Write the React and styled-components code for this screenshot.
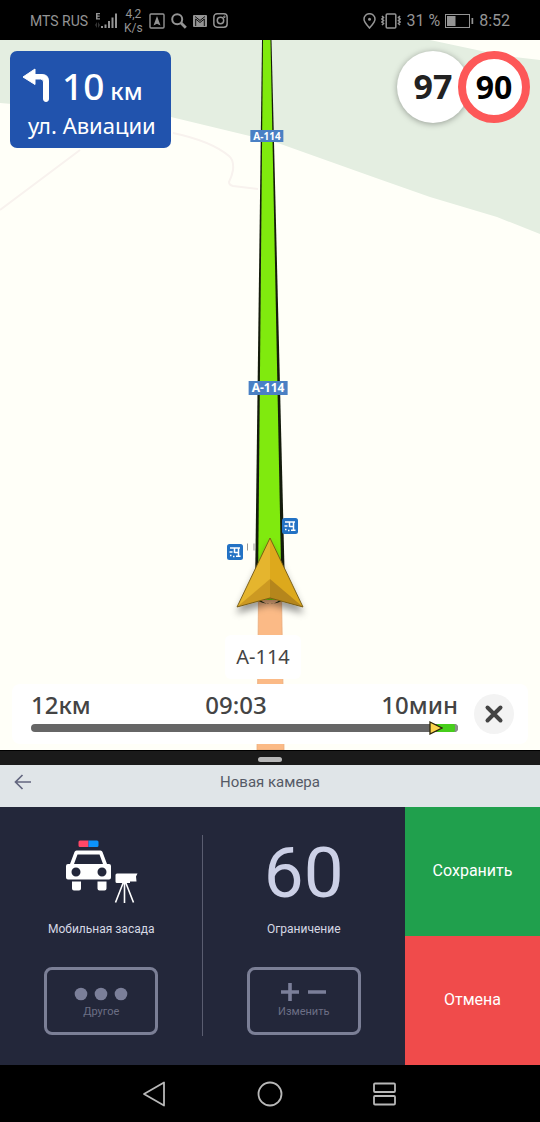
import React from "react";
import styled, { createGlobalStyle } from "styled-components";

const GlobalStyle = createGlobalStyle`
  *, *::before, *::after { box-sizing: border-box; }
  body { margin: 0; background: #000; }
  button { font: inherit; color: inherit; border: 0; padding: 0; background: none; cursor: pointer; }
  svg { display: block; flex: none; }
`;

const mapFont = `"Noto Sans", "Open Sans", sans-serif`;
const uiFont = `Roboto, "Liberation Sans", sans-serif`;

const Screen = styled.div`
  display: flex;
  flex-direction: column;
  min-height: 100vh;
  font-family: ${uiFont};
`;

const StatusBar = styled.header`
  display: flex;
  align-items: center;
  justify-content: space-between;
  height: 40px;
  padding: 1px 30px 0;
  background: #000;
  color: #949494;
`;

const StatusGroup = styled.div`
  display: flex;
  align-items: center;
  gap: ${(p) => p.$gap}px;
`;

const StatusText = styled.span`
  font-size: ${(p) => p.$size}px;
  line-height: 14px;
  white-space: pre-line;
  text-align: center;
`;

const MapView = styled.main`
  position: relative;
  display: flex;
  flex-direction: column;
  flex: 1 0 auto;
  min-height: 640px;
  overflow: hidden;
  background: #fffff8;
  font-family: ${mapFont};
`;

const MapDrawing = styled.svg`
  position: absolute;
  inset: 0;
  width: 100%;
  height: 100%;
`;

const Shield = styled.span`
  position: absolute;
  left: calc(50% + ${(p) => p.$x}px);
  top: ${(p) => p.$y}px;
  transform: translate(-50%, -50%);
  padding: 0 3px;
  background: #4a80c4;
  color: #fff;
  font-size: ${(p) => p.$size}px;
  font-weight: 700;
  line-height: ${(p) => p.$size + 2}px;
`;

const TopRow = styled.div`
  position: relative;
  display: flex;
  align-items: flex-start;
  justify-content: space-between;
  padding: 11px 10px 0;
`;

const TurnCard = styled.section`
  display: flex;
  flex-direction: column;
  width: 161px;
  height: 97px;
  padding: 12px 14px 0 12px;
  border-radius: 7px;
  background: #2153ad;
  color: #fff;
`;

const TurnDistance = styled.div`
  display: flex;
  align-items: baseline;
  gap: 6px;
  height: 46px;
  font-size: 37px;
  font-weight: 500;
  line-height: 46px;

  svg { align-self: flex-start; margin: 4px 6px 0 0; }
  small { font-size: 24px; }
`;

const TurnStreet = styled.div`
  padding-left: 6px;
  font-size: 22px;
  line-height: 32px;
  white-space: nowrap;
`;

const Speeds = styled.div`
  display: flex;
`;

const SpeedDisc = styled.div`
  display: flex;
  align-items: center;
  justify-content: center;
  width: 72px;
  height: 72px;
  padding-bottom: 2px;
  border-radius: 50%;
  background: #fff;
  color: #222;
  font-size: 34px;
  font-weight: 700;
  box-shadow: 0 1px 6px rgba(0, 0, 0, 0.35);
`;

const LimitDisc = styled(SpeedDisc)`
  margin-left: -11px;
  border: 8px solid #fd5858;
  color: #000;
  font-size: 32px;
  box-shadow: none;
`;

const MapBottom = styled.div`
  position: relative;
  display: flex;
  flex-direction: column;
  align-items: center;
  gap: 5px;
  margin-top: auto;
  padding: 0 12px 6px;
`;

const RoadName = styled.div`
  margin-right: 14px;
  padding: 0 11px;
  border-radius: 6px;
  background: #fff;
  color: #444;
  font-size: 20px;
  line-height: 44px;
`;

const TripPanel = styled.section`
  display: flex;
  align-items: center;
  gap: 16px;
  align-self: stretch;
  height: 60px;
  padding: 0 14px 0 19px;
  border-radius: 8px;
  background: #fff;
`;

const TripInfo = styled.div`
  flex: 1;
  padding-bottom: 8px;
`;

const TripFigures = styled.div`
  display: flex;
  justify-content: space-between;
  color: #444;
  font-size: 24px;
  font-weight: 500;
  line-height: 32px;
`;

const TripTrack = styled.div`
  position: relative;
  display: flex;
  justify-content: flex-end;
  height: 8px;
  margin-top: 3px;
  border-radius: 4px;
  background: #666;
`;

const TripLeft = styled.div`
  position: relative;
  width: 5%;
  border-right: 3px solid #8a8f8a;
  border-radius: 0 4px 4px 0;
  background: #46ce1b;

  svg { position: absolute; left: -8px; top: -3px; }
`;

const CloseButton = styled.button`
  display: flex;
  align-items: center;
  justify-content: center;
  width: 40px;
  height: 40px;
  border-radius: 50%;
  background: #f3f3f3;
`;

const SplitHandle = styled.div`
  display: flex;
  align-items: center;
  justify-content: center;
  height: 15px;
  padding-top: 2px;
  background: #1a1a1a;
  border-top: 1px solid #000;

  &::before {
    content: "";
    width: 24px;
    height: 5px;
    border-radius: 3px;
    background: #b8b8b8;
  }
`;

const TitleBar = styled.header`
  display: grid;
  grid-template-columns: 38px 1fr 38px;
  align-items: center;
  height: 42px;
  padding: 0 4px 8px;
  background: #e0e5e8;
  color: #555a66;
`;

const BackButton = styled.button`
  display: flex;
  justify-content: center;
`;

const Title = styled.h1`
  margin: 0;
  font-size: 15px;
  font-weight: 400;
  line-height: 20px;
  text-align: center;
`;

const CameraForm = styled.section`
  display: grid;
  grid-template-columns: 3fr 3fr 2fr;
  height: 258px;
  background: #23273a;
`;

const Setting = styled.div`
  position: relative;
  display: flex;
  flex-direction: column;
  align-items: center;
  padding: 29px 0 30px;

  & + &::before {
    content: "";
    position: absolute;
    left: -1px;
    top: 28px;
    bottom: 29px;
    width: 1px;
    background: #5a5d70;
  }
`;

const SettingValue = styled.div`
  display: flex;
  align-items: center;
  height: 74px;
  color: #ccd0e6;
  font-size: 71px;
  line-height: 72px;
`;

const SettingLabel = styled.div`
  margin-top: 11px;
  color: #d6d8e4;
  font-size: 12px;
  line-height: 16px;
`;

const SettingButton = styled.button`
  display: flex;
  flex-direction: column;
  align-items: center;
  justify-content: center;
  gap: 4px;
  width: 114px;
  height: 68px;
  margin-top: auto;
  border: 3px solid #7b7f96;
  border-radius: 8px;
  color: #6c6f85;
  font-size: 11px;
  line-height: 14px;
`;

const Actions = styled.div`
  display: flex;
  flex-direction: column;
`;

const ActionButton = styled.button`
  flex: 1;
  padding-bottom: 2px;
  background: ${(p) => p.$color};
  color: #fff;
  font-size: 16px;
`;

const NavBar = styled.nav`
  display: flex;
  align-items: center;
  justify-content: center;
  gap: 89px;
  height: 57px;
  background: #000;
`;

const NavButton = styled.button`
  display: flex;
`;

const SignalIcon = () => (
  <svg width="24" height="18" viewBox="0 0 24 18" fill="#949494">
    <path d="M2 1h4v1.300H3.500v1.300H5.700v1.200H3.500v1.400H6v1.300H2z" />
    <path d="M1 13l2-3v6zM4 10l2 3-2 3z" opacity=".35" />
    <path d="M7 14h2v2H7zM10.500 12.500h2V16h-2zM14 9h2v7h-2zM17.500 5.500h2V16h-2zM21 1.500h2V16h-2z" />
  </svg>
);

const NavigatorIcon = () => (
  <svg width="16" height="16" viewBox="0 0 16 16">
    <rect x="1" y="1" width="14" height="14" rx="1" fill="none" stroke="#949494" strokeWidth="1.400" />
    <path d="M8 3l3.500 9.500L8 10.700l-3.500 1.800z" fill="#949494" />
  </svg>
);

const SearchIcon = () => (
  <svg width="16" height="16" viewBox="0 0 16 16" fill="none" stroke="#949494">
    <circle cx="6.200" cy="6.200" r="5" strokeWidth="2" />
    <path d="M9.800 9.800l5 5" strokeWidth="2.800" />
  </svg>
);

const MailIcon = () => (
  <svg width="14" height="12" viewBox="0 0 14 12">
    <rect width="14" height="12" rx="1" fill="#949494" />
    <path d="M2.700 11V4L7 7.500 11.300 4V11M2 1.500l5 4 5-4" fill="none" stroke="#000" strokeWidth=".9" />
  </svg>
);

const CameraIcon = () => (
  <svg width="15" height="15" viewBox="0 0 14 14" fill="none" stroke="#949494" strokeWidth="1.400">
    <rect x=".8" y=".8" width="12.400" height="12.400" rx="3" />
    <circle cx="7" cy="7" r="3" />
    <circle cx="10.600" cy="3.500" r=".4" />
  </svg>
);

const PlaceIcon = () => (
  <svg width="13" height="16" viewBox="0 0 13 16">
    <path d="M6.500 15C3.500 11.500 1 9 1 6.200a5.500 5.500 0 0 1 11 0C12 9 9.500 11.500 6.500 15z" fill="none" stroke="#949494" strokeWidth="1.500" />
    <circle cx="6.500" cy="6.200" r="1.500" fill="#949494" />
  </svg>
);

const VibrateIcon = () => (
  <svg width="20" height="16" viewBox="0 0 20 16" fill="none" stroke="#949494">
    <rect x="5.200" y="1" width="9.600" height="14" rx="1" strokeWidth="1.500" />
    <path d="M1 3l1.500 1.500L1 6l1.500 1.500L1 9l1.500 1.500L1 12M19 3l-1.500 1.500L19 6l-1.500 1.500L19 9l-1.500 1.500L19 12" strokeWidth="1.600" />
  </svg>
);

const BatteryIcon = () => (
  <svg width="29" height="14" viewBox="0 0 29 14">
    <rect x=".5" y=".5" width="24" height="13" fill="none" stroke="#949494" />
    <path d="M2 2h8.500v10H2zM26.500 4h1.700v6h-1.700z" fill="#949494" />
  </svg>
);

const TurnLeftIcon = () => (
  <svg width="28" height="36" viewBox="0 0 28 36">
    <path d="M1 10L13 2v5.500h7q6.500 0 6.500 6.500v18a2.500 2.500 0 0 1-5 0V15q0-3-3-3H13v5.500z" fill="#fff" stroke="#fff" strokeLinejoin="round" />
  </svg>
);

const BusStop = () => (
  <g>
    <rect width="16" height="16" rx="2.500" fill="#2372c4" />
    <path d="M3 4h10M7.500 4v5M11.500 4v8M7.500 8.500h4M9 12.300h4.500M2.500 8h3M3 11.500h1.500M6 12.500h1.500" stroke="#fff" strokeWidth="1.500" fill="none" />
  </g>
);

const PatrolIcon = () => (
  <svg width="74" height="66" viewBox="0 0 74 66">
    <path d="M14.500 2a1.500 1.500 0 0 1 1.500-1.500h8.500v6.500H16A1.500 1.500 0 0 1 14.500 5.500z" fill="#ff4767" />
    <path d="M24.500.5H33A1.500 1.500 0 0 1 34.500 2v3.500A1.500 1.500 0 0 1 33 7h-8.500z" fill="#0c93fb" />
    <path fillRule="evenodd" fill="#fff" d="M12.500 10.500h24q1.500 0 2 1.500l4.500 12h2q2 0 2 2v11.500q0 2-2 2h-41q-2 0-2-2V26q0-2 2-2h2l4.500-12q.5-1.500 2-1.500zM13.500 14.500L10 24h29l-3.500-9.500zM12 27.500a4.500 4.500 0 1 0 0 9 4.500 4.500 0 0 0 0-9zM38 27.500a4.500 4.500 0 1 0 0 9 4.500 4.500 0 0 0 0-9z" />
    <path d="M8 41.500h9v7q0 2-2 2h-5q-2 0-2-2zM33.500 41.500h9v7q0 2-2 2h-5q-2 0-2-2z" fill="#fff" />
    <path d="M53 33.500h20.500l-1.500 3 .5 5h-6.500v1.500H53q-1.500 0-1.500-1.500V35q0-1.500 1.500-1.500z" fill="#fff" />
    <path d="M60.500 42v21M59.500 42L51.500 62.500M61.500 42l8 20.500" stroke="#fff" strokeWidth="1.600" fill="none" />
  </svg>
);

const MapCanvas = () => (
  <MapDrawing viewBox="0 0 540 710" preserveAspectRatio="xMidYMin slice" aria-hidden="true">
    <defs>
      <filter id="arrowShadow" x="-30%" y="-30%" width="160%" height="170%">
        <feDropShadow dx="0" dy="6" stdDeviation="3.500" floodColor="#000" floodOpacity=".4" />
      </filter>
    </defs>
    <path d="M-400 0H430L505 16 540 20 900 60V360L540 194 497 177 430 157 376 138 275 102 171 77 0 63-400 30z" fill="#e4eee1" />
    <path d="M0 170L80 110M173 93q38 8 56 23 5 4 4 14-1 6-4 12 0 3 4 4l25 3" fill="none" stroke="#f8f2ee" strokeWidth="2" />
    <path d="M258.500 555H281.500L284 710H257z" fill="#fbba86" stroke="#e8ab7b" strokeWidth=".8" />
    <path d="M262 0H271.500L285 550 283 560H256.500L255 550z" fill="#151c0c" />
    <path d="M263 0H270.500L281.500 550V560H258V550z" fill="#80ea0e" />
    <path d="M247.500 503.500v7M254 503.500v7" stroke="#999" />
    <g transform="translate(282 478)"><BusStop /></g>
    <g transform="translate(227 504)"><BusStop /></g>
    <path d="M258 558q12 12 24 0v3q-12 6-24 0z" fill="#17260d" />
    <g filter="url(#arrowShadow)">
      <path d="M270 498L237 567 270 558z" fill="#e5b52d" />
      <path d="M270 498L303 567 270 558z" fill="#dda91c" />
      <path d="M237 567L270 539V558z" fill="#cc9924" />
      <path d="M303 567L270 539V558z" fill="#b5861b" />
      <path d="M270 498L303 567 270 558 237 567z" fill="none" stroke="#715714" strokeWidth=".9" />
    </g>
  </MapDrawing>
);

export default function App() {
  return (
    <Screen>
      <GlobalStyle />
      <StatusBar>
        <StatusGroup $gap={6}>
          <StatusText $size={14}>MTS RUS</StatusText>
          <SignalIcon />
          <StatusText $size={12}>{"4,2\nK/s"}</StatusText>
          <NavigatorIcon />
          <SearchIcon />
          <MailIcon />
          <CameraIcon />
        </StatusGroup>
        <StatusGroup $gap={5}>
          <PlaceIcon />
          <VibrateIcon />
          <StatusText $size={16}>31 %</StatusText>
          <BatteryIcon />
          <StatusText $size={16}>8:52</StatusText>
        </StatusGroup>
      </StatusBar>

      <MapView>
        <MapCanvas />
        <Shield $x={-3} $y={96} $size={10}>A-114</Shield>
        <Shield $x={-2} $y={348} $size={12}>A-114</Shield>
        <TopRow>
          <TurnCard>
            <TurnDistance>
              <TurnLeftIcon />
              10 <small>км</small>
            </TurnDistance>
            <TurnStreet>ул. Авиации</TurnStreet>
          </TurnCard>
          <Speeds>
            <SpeedDisc>97</SpeedDisc>
            <LimitDisc>90</LimitDisc>
          </Speeds>
        </TopRow>
        <MapBottom>
          <RoadName>A-114</RoadName>
          <TripPanel>
            <TripInfo>
              <TripFigures>
                <span>12км</span>
                <span>09:03</span>
                <span>10мин</span>
              </TripFigures>
              <TripTrack>
                <TripLeft>
                  <svg width="14" height="14" viewBox="0 0 14 14">
                    <path d="M1 1l12 6-12 6z" fill="#fbd34c" stroke="#2b2408" strokeWidth="1.300" />
                  </svg>
                </TripLeft>
              </TripTrack>
            </TripInfo>
            <CloseButton aria-label="Закрыть">
              <svg width="20" height="20" viewBox="0 0 20 20">
                <path d="M3.500 3.500l13 13M16.500 3.500l-13 13" stroke="#444" strokeWidth="4" strokeLinecap="round" />
              </svg>
            </CloseButton>
          </TripPanel>
        </MapBottom>
      </MapView>

      <SplitHandle />

      <TitleBar>
        <BackButton aria-label="Назад">
          <svg width="18" height="16" viewBox="0 0 18 16" fill="none" stroke="#63667f" strokeWidth="1.700">
            <path d="M17 8H1.500M8.500 1l-7 7 7 7" />
          </svg>
        </BackButton>
        <Title>Новая камера</Title>
      </TitleBar>

      <CameraForm>
        <Setting>
          <SettingValue>
            <PatrolIcon />
          </SettingValue>
          <SettingLabel>Мобильная засада</SettingLabel>
          <SettingButton>
            <svg width="54" height="18" viewBox="0 0 54 18" fill="#7b7f99">
              <circle cx="7" cy="11" r="6.300" />
              <circle cx="27" cy="11" r="6.300" />
              <circle cx="47" cy="11" r="6.300" />
            </svg>
            Другое
          </SettingButton>
        </Setting>
        <Setting>
          <SettingValue>60</SettingValue>
          <SettingLabel>Ограничение</SettingLabel>
          <SettingButton>
            <svg width="46" height="18" viewBox="0 0 46 18" fill="none" stroke="#7b7f99" strokeWidth="3.600">
              <path d="M0 9h18M9 0v18M27 9h18" />
            </svg>
            Изменить
          </SettingButton>
        </Setting>
        <Actions>
          <ActionButton $color="#20a04d">Сохранить</ActionButton>
          <ActionButton $color="#f04b4b">Отмена</ActionButton>
        </Actions>
      </CameraForm>

      <NavBar>
        <NavButton aria-label="Назад">
          <svg width="26" height="26" viewBox="0 0 26 26" fill="none" stroke="#b8b8b8" strokeWidth="1.800" strokeLinejoin="round">
            <path d="M22 1.500v23L2 13z" />
          </svg>
        </NavButton>
        <NavButton aria-label="Домой">
          <svg width="26" height="26" viewBox="0 0 26 26" fill="none" stroke="#b8b8b8" strokeWidth="1.800">
            <circle cx="13" cy="13" r="11.500" />
          </svg>
        </NavButton>
        <NavButton aria-label="Недавние">
          <svg width="26" height="26" viewBox="0 0 26 26" fill="none" stroke="#b8b8b8" strokeWidth="1.800">
            <rect x="2" y="2.500" width="21" height="8.500" rx="1" />
            <rect x="2" y="15" width="21" height="8.500" rx="1" />
          </svg>
        </NavButton>
      </NavBar>
    </Screen>
  );
}
